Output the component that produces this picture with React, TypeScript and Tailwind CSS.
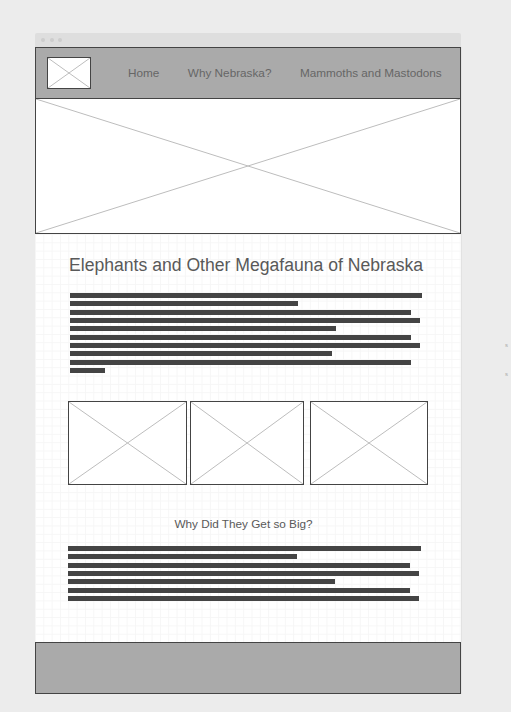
import React from 'react';

const Placeholder: React.FC<{ className?: string }> = ({ className = '' }) => {
  return (
    <div className={`relative bg-white border border-[#444] ${className}`}>
      <svg className="absolute inset-0 w-full h-full" preserveAspectRatio="none" viewBox="0 0 100 100">
        <line x1="0" y1="0" x2="100" y2="100" stroke="#bdbdbd" strokeWidth="1" vectorEffect="non-scaling-stroke" />
        <line x1="100" y1="0" x2="0" y2="100" stroke="#bdbdbd" strokeWidth="1" vectorEffect="non-scaling-stroke" />
      </svg>
    </div>
  );
};

const TextBlock: React.FC<{ widths: number[]; className?: string }> = ({ widths, className = '' }) => {
  return (
    <div className={`flex flex-col gap-[3.33px] ${className}`}>
      {widths.map((w, i) => (
        <div key={i} className="h-[5px] bg-[#444]" style={{ width: w }} />
      ))}
    </div>
  );
};

export default function App() {
  return (
    <div className="relative w-full h-[712px] bg-[#ececec] overflow-hidden font-['Liberation_Sans',Arial,sans-serif]">
      <div className="ml-[35px] pt-[33px] w-[426px]">
        {/* window chrome */}
        <div className="h-[14px] bg-[#dedede] rounded-t-[2px] flex items-center gap-[4.5px] pl-[6px]">
          <span className="w-[4px] h-[4px] rounded-full bg-[#cdcdcd]" />
          <span className="w-[4px] h-[4px] rounded-full bg-[#cdcdcd]" />
          <span className="w-[4px] h-[4px] rounded-full bg-[#cdcdcd]" />
        </div>

        <div className="bg-white shadow-[1px_0_0_#e2e2e2]">
          {/* header */}
          <div className="h-[52px] bg-[#aaa] border border-[#444] flex items-center pl-[11px]">
            <Placeholder className="w-[44px] h-[32px]" />
            <nav className="ml-[37px] flex items-center gap-[28.5px] text-[11.75px] leading-[14px] text-[#666]">
              <span>Home</span>
              <span>Why Nebraska?</span>
              <span>Mammoths and Mastodons</span>
            </nav>
          </div>

          {/* hero */}
          <Placeholder className="h-[135px] border-t-0" />

          {/* main */}
          <div className="h-[408px] px-[33px] pt-[21px] bg-white bg-[linear-gradient(#f6f6f6_1px,transparent_1px),linear-gradient(90deg,#f6f6f6_1px,transparent_1px)] bg-[size:8.33px_8.33px]">
            <h1 className="ml-[1px] text-[17.6px] leading-[20px] text-[#595959]">Elephants and Other Megafauna of Nebraska</h1>
            <TextBlock className="mt-[18px] ml-[2px]" widths={[352, 228, 341, 350, 266, 341, 350, 262, 341, 35]} />

            <div className="mt-[28px] flex">
              <Placeholder className="w-[119px] h-[84px]" />
              <Placeholder className="ml-[3px] w-[114px] h-[84px]" />
              <Placeholder className="ml-[6px] w-[118px] h-[84px]" />
            </div>

            <h2 className="mt-[32px] w-[351px] text-center text-[11.75px] leading-[14px] text-[#595959]">Why Did They Get so Big?</h2>
            <TextBlock className="mt-[15px]" widths={[353, 229, 342, 351, 267, 342, 351]} />
          </div>

          {/* footer */}
          <div className="h-[52px] bg-[#aaa] border border-[#444]" />
        </div>
      </div>

      <span className="absolute left-[505px] top-[342px] text-[6px] leading-[7px] text-[#aaa]">s</span>
      <span className="absolute left-[505px] top-[371px] text-[6px] leading-[7px] text-[#aaa]">s</span>
    </div>
  );
}
